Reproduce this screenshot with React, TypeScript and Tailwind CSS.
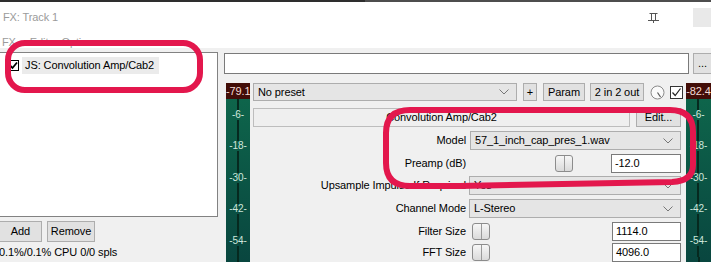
import React from "react";
import clsx from "clsx";

const Chevron = () => (
  <svg width="10" height="6" viewBox="0 0 10 6" className="shrink-0">
    <path d="M0.5 0.5 L5 5 L9.5 0.5" fill="none" stroke="#777" strokeWidth="1" />
  </svg>
);

const Select = ({ value, className }: { value: string; className?: string }) => (
  <div
    className={clsx(
      "flex items-center h-full shrink-0 bg-[#e5e5e5] border border-[#adadad] pl-[4px] pr-[7px]",
      className
    )}
  >
    <span className="flex-1 truncate">{value}</span>
    <Chevron />
  </div>
);

const Button = ({ label, className }: { label: string; className?: string }) => (
  <div
    className={clsx(
      "flex items-center justify-center h-full shrink-0 bg-[#e1e1e1] border border-[#adadad] whitespace-nowrap",
      className
    )}
  >
    {label}
  </div>
);

const TextBox = ({ value, className }: { value: string; className?: string }) => (
  <div
    className={clsx(
      "flex items-center h-full shrink-0 bg-white border border-[#7a7a7a] pl-[3px]",
      className
    )}
  >
    {value}
  </div>
);

const Thumb = ({ className }: { className?: string }) => (
  <div
    className={clsx(
      "flex h-[17px] w-[18px] shrink-0 rounded-[3px] border border-[#8c8c8c] bg-linear-to-b from-[#f7f7f7] to-[#dadada]",
      className
    )}
  >
    <div className="flex-1" />
    <div className="w-[1px] bg-[#9a9a9a]" />
    <div className="flex-1" />
  </div>
);

const Meter = ({ peak, marks, className }: { peak: string; marks: string[]; className?: string }) => (
  <div className={clsx("flex flex-col h-full shrink-0", className)}>
    <div className="h-[16px] bg-[#420d07] text-[#f4dcd6] text-[11px] leading-[16px] text-center overflow-hidden whitespace-nowrap">
      {peak}
    </div>
    <div className="flex-1 flex flex-col items-center bg-linear-to-b from-[#0e654b] to-[#09463f]">
      {marks.map((m) => (
        <div key={m} className="h-[31.5px] flex flex-col items-center">
          <div className="flex-1 w-[2px] bg-[#06291f]" />
          <span className="text-[10px] leading-[10px] text-[#cfe6dc] whitespace-nowrap">{m}</span>
          <div className="flex-1 w-[2px] bg-[#06291f]" />
        </div>
      ))}
      <div className="flex-1 w-[2px] bg-[#06291f]" />
    </div>
  </div>
);

const ParamRow = ({
  label,
  className,
  children,
}: {
  label: string;
  className?: string;
  children: React.ReactNode;
}) => (
  <div className={clsx("flex h-[19px]", className)}>
    <div className="w-[213px] shrink-0 flex items-center justify-end whitespace-nowrap">{label}</div>
    <div className="ml-[4px] w-[211px] shrink-0 flex items-center h-full">{children}</div>
  </div>
);

const marks = ["-6-", "-18-", "-30-", "-42-", "-54-"];

export default function App() {
  return (
    <div className="relative w-[711px] h-[262px] overflow-hidden bg-[#f0f0f0] font-['Liberation_Sans',Arial,sans-serif] text-[11px] text-black tracking-[-0.1px] leading-none">
      <div className="flex h-[2px]">
        <div className="w-[365px] bg-[#2e2e2e]" />
        <div className="flex-1 bg-[#4d4d4d]" />
      </div>

      {/* window header */}
      <div className="bg-white h-[46px] flex flex-col pt-[4px]">
        <div className="flex items-center h-[22px] pl-[3px] text-[#9b9b9b]">
          <span>FX: Track 1</span>
          <div className="flex-1" />
          <svg width="13" height="11" viewBox="0 0 13 11">
            <path
              d="M2.5 1.5 H10.5 M4.5 1.5 V8 M8.5 1.5 V8 M1 8.5 H12 M6.5 8.5 V11"
              fill="none"
              stroke="#555"
              strokeWidth="1"
            />
          </svg>
          <div className="ml-[33px] w-[18px] h-[19px] bg-[#e9e9e9]" />
        </div>
        <div className="flex items-center h-[12px] mt-[8px] text-[#9b9b9b]">
          <span className="ml-[2px]">FX</span>
          <span className="ml-[14px]">Edit</span>
          <span className="ml-[13px]">Options</span>
        </div>
      </div>

      <div className="flex h-[214px]">
        {/* left: chain list */}
        <div className="w-[218px] shrink-0 flex flex-col">
          <div className="mt-[4px] h-[165px] bg-white border-t border-r border-b border-[#828282]">
            <div className="flex items-center h-[17px] mt-[4px]">
              <div className="ml-[8px] w-[11px] h-[11px] border border-black bg-white flex items-center justify-center">
                <svg width="9" height="9" viewBox="0 0 9 9">
                  <path d="M1 4.5 L3.5 7 L8 1.5" fill="none" stroke="#000" strokeWidth="1.8" />
                </svg>
              </div>
              <div className="ml-[3px] w-[137px] h-full flex items-center bg-[#ebebeb] px-[3px] whitespace-nowrap">
                JS: Convolution Amp/Cab2
              </div>
            </div>
          </div>
          <div className="flex h-[21px] mt-[4px]">
            <Button label="Add" className="w-[43px] -ml-[1px]" />
            <Button label="Remove" className="w-[48px] ml-[5px]" />
          </div>
          <div className="mt-[4px] leading-[12px] -ml-[1px] whitespace-nowrap">0.1%/0.1% CPU 0/0 spls</div>
        </div>

        <div className="w-[6px] shrink-0" />

        {/* right: plugin area */}
        <div className="flex-1 min-w-0 flex flex-col">
          <div className="flex h-[21px] mt-[5px]">
            <div className="w-[465px] shrink-0 h-full bg-white border border-[#7a7a7a]" />
            <div className="ml-[4px] w-[30px] shrink-0 h-full bg-[#e1e1e1] border border-[#adadad] pl-[4px] flex items-center">
              ...
            </div>
          </div>

          <div className="flex flex-1 mt-[9px]">
            <Meter peak="-79.1" marks={marks} className="ml-[2px] w-[24px]" />

            <div className="ml-[3px] w-[430px] shrink-0 flex flex-col">
              <div className="flex items-center h-[18px]">
                <Select value="No preset" className="w-[264px]" />
                <Button label="+" className="ml-[6px] w-[14px]" />
                <Button label="Param" className="ml-[6px] w-[42px]" />
                <Button label="2 in 2 out" className="ml-[5px] w-[54px]" />
                <svg width="15" height="15" viewBox="0 0 15 15" className="ml-[6px] shrink-0">
                  <circle cx="7.5" cy="7.5" r="6.5" fill="#fafafa" stroke="#8a8a8a" />
                  <path d="M7.5 7.5 L10.5 12" stroke="#555" strokeWidth="1.2" />
                </svg>
                <div className="ml-[5px] w-[13px] h-[13px] shrink-0 border border-[#333] bg-white flex items-center justify-center">
                  <svg width="11" height="11" viewBox="0 0 11 11">
                    <path d="M1.5 5.5 L4.2 8.5 L9.5 1.5" fill="none" stroke="#222" strokeWidth="1.2" />
                  </svg>
                </div>
              </div>

              <div className="flex h-[19px] mt-[7px]">
                <div className="w-[377px] shrink-0 h-full flex items-center justify-center bg-[#efefef] border border-[#bdbdbd]">
                  Convolution Amp/Cab2
                </div>
                <Button label="Edit..." className="ml-[6px] w-[45px]" />
              </div>

              <ParamRow label="Model" className="mt-[4px]">
                <Select value="57_1_inch_cap_pres_1.wav" className="w-full" />
              </ParamRow>
              <ParamRow label="Preamp (dB)" className="mt-[4px]">
                <Thumb className="ml-[85px]" />
                <TextBox value="-12.0" className="ml-auto w-[70px]" />
              </ParamRow>
              <ParamRow label="Upsample Impulse If Required" className="mt-[3px]">
                <Select value="Yes" className="w-[212px] -ml-[1px]" />
              </ParamRow>
              <ParamRow label="Channel Mode" className="mt-[4px]">
                <Select value="L-Stereo" className="w-[212px] -ml-[1px]" />
              </ParamRow>
              <ParamRow label="Filter Size" className="mt-[4px]">
                <Thumb className="ml-[2px]" />
                <TextBox value="1114.0" className="ml-auto w-[69px]" />
              </ParamRow>
              <ParamRow label="FFT Size" className="mt-[2px]">
                <Thumb className="ml-[2px]" />
                <TextBox value="4096.0" className="ml-auto w-[69px]" />
              </ParamRow>
            </div>

            <Meter peak="-82.4" marks={marks} className="ml-[3px] w-[25px]" />
          </div>
        </div>
      </div>

      {/* hand-drawn highlight marks over the screenshot */}
      <svg
        className="absolute inset-0 pointer-events-none"
        width="711"
        height="262"
        viewBox="0 0 711 262"
      >
        <rect x="8" y="43" width="192" height="47" rx="17" fill="none" stroke="#e3174d" strokeWidth="6" />
        <path
          d="M410 110 L670 110 Q693 110 693 132 L693 165 Q693 181 672 182 L460 186 L410 186 Q386 186 386 163 L386 133 Q386 110 410 110 Z"
          fill="none"
          stroke="#e3174d"
          strokeWidth="6"
        />
      </svg>
    </div>
  );
}
